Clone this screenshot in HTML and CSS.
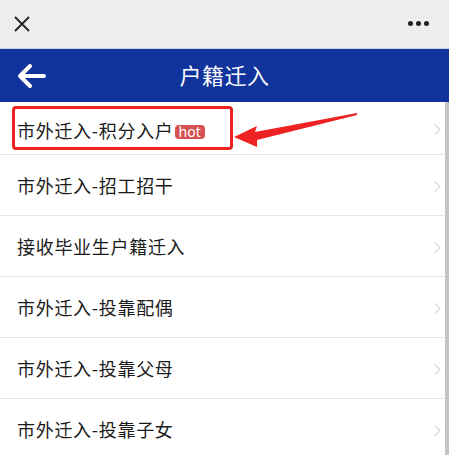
FILE: index.html
```html
<!DOCTYPE html>
<html>
<head>
<meta charset="utf-8">
<link rel="stylesheet" href="styles.css">
</head>
<body>
<div class="topbar">
  <svg class="close" width="18" height="18" viewBox="0 0 18 18"><path d="M2 2L16 16M16 2L2 16" stroke="#222" stroke-width="1.8" fill="none"/></svg>
  <div class="dots"><span></span><span></span><span></span></div>
</div>
<div class="header">
  <svg class="back" width="30" height="26" viewBox="0 0 30 26"><path d="M28 13H5M14 3L4 13L14 23" stroke="#fff" stroke-width="4" fill="none" stroke-linecap="round" stroke-linejoin="round"/></svg>
  <div class="title">户籍迁入</div>
</div>
<div class="main">
  <div class="list">
    <div class="row first"><span class="label">市外迁入-积分入户</span><span class="hot">hot</span><span class="chev"></span></div>
    <div class="row"><span class="label">市外迁入-招工招干</span><span class="chev"></span></div>
    <div class="row"><span class="label">接收毕业生户籍迁入</span><span class="chev"></span></div>
    <div class="row"><span class="label">市外迁入-投靠配偶</span><span class="chev"></span></div>
    <div class="row"><span class="label">市外迁入-投靠父母</span><span class="chev"></span></div>
    <div class="row"><span class="label">市外迁入-投靠子女</span><span class="chev"></span></div>
  </div>
  <div class="scrollbar"></div>
  <div class="redbox"></div>
  <svg class="arrow" width="130" height="40" viewBox="0 0 130 40"><path d="M1 27L24 16L22 22L124 3L124 5L24 30L24 37Z" fill="#ee2222"/></svg>
</div>
</body>
</html>
```
FILE: styles.css
```css
* { box-sizing: border-box; }
html, body { margin: 0; padding: 0; }
body {
  width: 449px; height: 455px; overflow: hidden; background: #fff;
  font-family: "Noto Sans CJK SC", "Noto Sans", sans-serif;
}
.topbar {
  height: 48px; background: #ededed; display: flex; align-items: center;
  justify-content: space-between; padding: 0 20px 0 13px;
}
.close { display: block; }
.dots { display: flex; gap: 3px; margin-top: -2px; }
.dots span { width: 5px; height: 5px; border-radius: 50%; background: #222; }
.header {
  height: 54px; background: #10349c; position: relative;
  display: flex; align-items: center; justify-content: center;
  border-top: 1px solid #c9d3ea;
}
.back { position: absolute; left: 16px; top: 14px; }
.title { color: #fff; font-size: 22px; letter-spacing: 0.5px; margin-top: -4px; }
.main { position: relative; display: flex; height: 353px; }
.list { flex: 1; }
.row {
  height: 61px; display: flex; align-items: center; padding-left: 17px;
  border-bottom: 1px solid #e6e6e6; position: relative;
}
.row.first { height: 53px; padding-top: 4px; }
.label { font-size: 18px; color: #1a1a1a; letter-spacing: 0.7px; }
.hot {
  display: inline-block; background: #d65252; color: #fff; font-size: 14px;
  line-height: 14px; height: 14px; padding: 0 4px; border-radius: 4px;
  margin-left: 1px; margin-top: 4px; font-family: "Noto Sans", sans-serif;
}
.chev {
  position: absolute; right: 6px; top: 50%; width: 8px; height: 8px;
  border-right: 1.5px solid #cfcfcf; border-top: 1.5px solid #cfcfcf;
  transform: translateY(-30%) rotate(45deg);
}
.scrollbar { width: 4px; background: #c4c4c4; height: 100%; }
.redbox {
  position: absolute; left: 12px; top: 4px; width: 221px; height: 44px;
  border: 3px solid #ee2222; border-radius: 4px;
}
.arrow { position: absolute; left: 233px; top: 8px; }
```
